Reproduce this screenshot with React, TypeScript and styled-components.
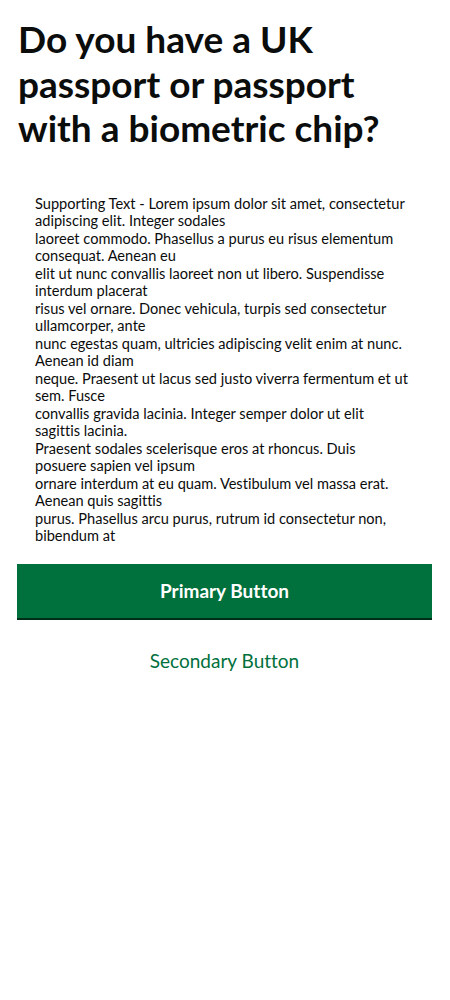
import React from "react";
import styled, { createGlobalStyle } from "styled-components";

const Global = createGlobalStyle`
  body { margin: 0; background: #fff; font-family: Lato, "Liberation Sans", sans-serif; color: #0b0c0c; font-variant-ligatures: none; }
`;

const Page = styled.main`
  display: flex;
  flex-direction: column;
  padding: 17px 18px 0 17px;
`;

const Title = styled.h1`
  margin: 0 0 0 1px;
  max-width: 395px;
  font-size: 37px;
  line-height: 44.5px;
  font-weight: 700;
  letter-spacing: 0;
  color: #0b0c0c;
`;

const Body = styled.p`
  margin: 44px 0 0 18px;
  width: 374px;
  font-size: 14.6px;
  line-height: 17.5px;
  color: #0b0c0c;
`;

const Primary = styled.button`
  margin-top: 19px;
  height: 54px;
  border: 0;
  background: #00703c;
  box-shadow: 0 2px 0 #002d18;
  color: #fff;
  font-family: inherit;
  font-variant-ligatures: none;
  font-size: 19px;
  font-weight: 700;
  cursor: pointer;
`;

const Secondary = styled.button`
  margin-top: 30px;
  align-self: center;
  border: 0;
  background: none;
  color: #00703c;
  font-family: inherit;
  font-variant-ligatures: none;
  font-size: 19px;
  cursor: pointer;
`;

const lines = [
  "Supporting Text - Lorem ipsum dolor sit amet, consectetur adipiscing elit. Integer sodales",
  "laoreet commodo. Phasellus a purus eu risus elementum consequat. Aenean eu",
  "elit ut nunc convallis laoreet non ut libero. Suspendisse interdum placerat",
  "risus vel ornare. Donec vehicula, turpis sed consectetur ullamcorper, ante",
  "nunc egestas quam, ultricies adipiscing velit enim at nunc. Aenean id diam",
  "neque. Praesent ut lacus sed justo viverra fermentum et ut sem. Fusce",
  "convallis gravida lacinia. Integer semper dolor ut elit sagittis lacinia.",
  "Praesent sodales scelerisque eros at rhoncus. Duis posuere sapien vel ipsum",
  "ornare interdum at eu quam. Vestibulum vel massa erat. Aenean quis sagittis",
  "purus. Phasellus arcu purus, rutrum id consectetur non, bibendum at",
];

export default function App() {
  return (
    <>
      <Global />
      <Page>
        <Title>Do you have a UK passport or passport with a biometric chip?</Title>
        <Body>
          {lines.map((l, i) => (
            <React.Fragment key={i}>
              {l}
              {i < lines.length - 1 && <br />}
            </React.Fragment>
          ))}
        </Body>
        <Primary>Primary Button</Primary>
        <Secondary>Secondary Button</Secondary>
      </Page>
    </>
  );
}
